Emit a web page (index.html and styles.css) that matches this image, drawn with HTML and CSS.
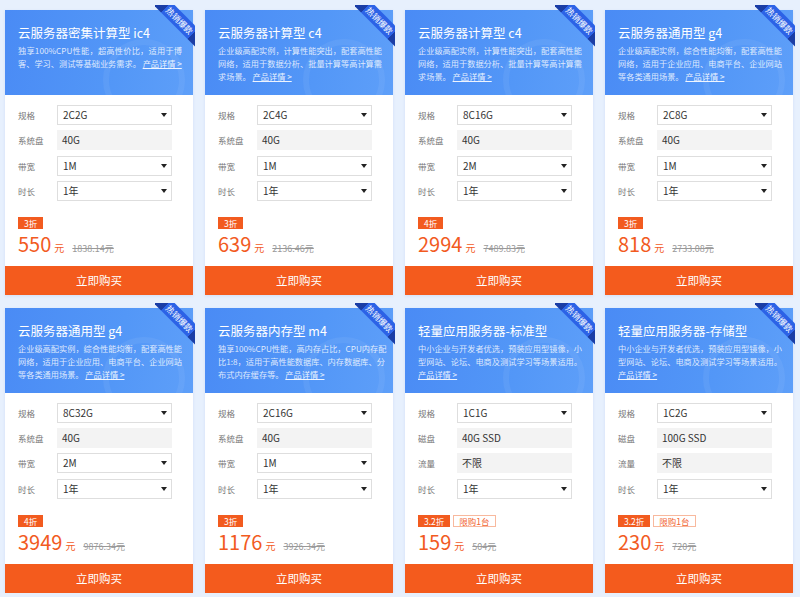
FILE: index.html
```html
<!DOCTYPE html>
<html lang="zh-CN">
<head>
  <meta charset="UTF-8" />
  <title>云服务器优惠</title>
  <link rel="stylesheet" href="styles.css">
</head>
<body>

  <div class="grid">

    <div class="card">
      <div class="head">
        <h3>云服务器密集计算型 ic4</h3>
        <p>
          <span>独享100%CPU性能，超高性价比，适用于博</span>
          <span>客、学习、测试等基础业务需求。 <a href="#">产品详情 &gt;</a></span>
        </p>
        <div class="ribbon"><span>热销爆款</span></div>
      </div>
      <div class="form">
        <div class="row"><label>规格</label><div class="select">2C2G</div></div>
        <div class="row"><label>系统盘</label><div class="field">40G</div></div>
        <div class="row"><label>带宽</label><div class="select">1M</div></div>
        <div class="row"><label>时长</label><div class="select">1年</div></div>
      </div>
      <div class="price">
        <div class="tags"><span class="tag">3折</span></div>
        <div class="amount"><b>550</b><i>元</i><s>1838.14元</s></div>
      </div>
      <button class="buy">立即购买</button>
    </div>

    <div class="card">
      <div class="head">
        <h3>云服务器计算型 c4</h3>
        <p>
          <span>企业级高配实例，计算性能突出，配套高性能</span>
          <span>网络，适用于数据分析、批量计算等高计算需</span>
          <span>求场景。 <a href="#">产品详情 &gt;</a></span>
        </p>
        <div class="ribbon"><span>热销爆款</span></div>
      </div>
      <div class="form">
        <div class="row"><label>规格</label><div class="select">2C4G</div></div>
        <div class="row"><label>系统盘</label><div class="field">40G</div></div>
        <div class="row"><label>带宽</label><div class="select">1M</div></div>
        <div class="row"><label>时长</label><div class="select">1年</div></div>
      </div>
      <div class="price">
        <div class="tags"><span class="tag">3折</span></div>
        <div class="amount"><b>639</b><i>元</i><s>2136.46元</s></div>
      </div>
      <button class="buy">立即购买</button>
    </div>

    <div class="card">
      <div class="head">
        <h3>云服务器计算型 c4</h3>
        <p>
          <span>企业级高配实例，计算性能突出，配套高性能</span>
          <span>网络，适用于数据分析、批量计算等高计算需</span>
          <span>求场景。 <a href="#">产品详情 &gt;</a></span>
        </p>
        <div class="ribbon"><span>热销爆款</span></div>
      </div>
      <div class="form">
        <div class="row"><label>规格</label><div class="select">8C16G</div></div>
        <div class="row"><label>系统盘</label><div class="field">40G</div></div>
        <div class="row"><label>带宽</label><div class="select">2M</div></div>
        <div class="row"><label>时长</label><div class="select">1年</div></div>
      </div>
      <div class="price">
        <div class="tags"><span class="tag">4折</span></div>
        <div class="amount"><b>2994</b><i>元</i><s>7489.83元</s></div>
      </div>
      <button class="buy">立即购买</button>
    </div>

    <div class="card">
      <div class="head">
        <h3>云服务器通用型 g4</h3>
        <p>
          <span>企业级高配实例，综合性能均衡，配套高性能</span>
          <span>网络，适用于企业应用、电商平台、企业网站</span>
          <span>等各类通用场景。 <a href="#">产品详情 &gt;</a></span>
        </p>
        <div class="ribbon"><span>热销爆款</span></div>
      </div>
      <div class="form">
        <div class="row"><label>规格</label><div class="select">2C8G</div></div>
        <div class="row"><label>系统盘</label><div class="field">40G</div></div>
        <div class="row"><label>带宽</label><div class="select">1M</div></div>
        <div class="row"><label>时长</label><div class="select">1年</div></div>
      </div>
      <div class="price">
        <div class="tags"><span class="tag">3折</span></div>
        <div class="amount"><b>818</b><i>元</i><s>2733.08元</s></div>
      </div>
      <button class="buy">立即购买</button>
    </div>

    <div class="card">
      <div class="head">
        <h3>云服务器通用型 g4</h3>
        <p>
          <span>企业级高配实例，综合性能均衡，配套高性能</span>
          <span>网络，适用于企业应用、电商平台、企业网站</span>
          <span>等各类通用场景。 <a href="#">产品详情 &gt;</a></span>
        </p>
        <div class="ribbon"><span>热销爆款</span></div>
      </div>
      <div class="form">
        <div class="row"><label>规格</label><div class="select">8C32G</div></div>
        <div class="row"><label>系统盘</label><div class="field">40G</div></div>
        <div class="row"><label>带宽</label><div class="select">2M</div></div>
        <div class="row"><label>时长</label><div class="select">1年</div></div>
      </div>
      <div class="price">
        <div class="tags"><span class="tag">4折</span></div>
        <div class="amount"><b>3949</b><i>元</i><s>9876.34元</s></div>
      </div>
      <button class="buy">立即购买</button>
    </div>

    <div class="card">
      <div class="head">
        <h3>云服务器内存型 m4</h3>
        <p>
          <span>独享100%CPU性能，高内存占比，CPU内存配</span>
          <span>比1:8，适用于高性能数据库、内存数据库、分</span>
          <span>布式内存缓存等。 <a href="#">产品详情 &gt;</a></span>
        </p>
        <div class="ribbon"><span>热销爆款</span></div>
      </div>
      <div class="form">
        <div class="row"><label>规格</label><div class="select">2C16G</div></div>
        <div class="row"><label>系统盘</label><div class="field">40G</div></div>
        <div class="row"><label>带宽</label><div class="select">1M</div></div>
        <div class="row"><label>时长</label><div class="select">1年</div></div>
      </div>
      <div class="price">
        <div class="tags"><span class="tag">3折</span></div>
        <div class="amount"><b>1176</b><i>元</i><s>3926.34元</s></div>
      </div>
      <button class="buy">立即购买</button>
    </div>

    <div class="card">
      <div class="head">
        <h3>轻量应用服务器-标准型</h3>
        <p>
          <span>中小企业与开发者优选，预装应用型镜像，小</span>
          <span>型网站、论坛、电商及测试学习等场景适用。</span>
          <span><a href="#">产品详情 &gt;</a></span>
        </p>
        <div class="ribbon"><span>热销爆款</span></div>
      </div>
      <div class="form">
        <div class="row"><label>规格</label><div class="select">1C1G</div></div>
        <div class="row"><label>磁盘</label><div class="field">40G SSD</div></div>
        <div class="row"><label>流量</label><div class="field">不限</div></div>
        <div class="row"><label>时长</label><div class="select">1年</div></div>
      </div>
      <div class="price">
        <div class="tags"><span class="tag">3.2折</span><span class="tag limit">限购1台</span></div>
        <div class="amount"><b>159</b><i>元</i><s>504元</s></div>
      </div>
      <button class="buy">立即购买</button>
    </div>

    <div class="card">
      <div class="head">
        <h3>轻量应用服务器-存储型</h3>
        <p>
          <span>中小企业与开发者优选，预装应用型镜像，小</span>
          <span>型网站、论坛、电商及测试学习等场景适用。</span>
          <span><a href="#">产品详情 &gt;</a></span>
        </p>
        <div class="ribbon"><span>热销爆款</span></div>
      </div>
      <div class="form">
        <div class="row"><label>规格</label><div class="select">1C2G</div></div>
        <div class="row"><label>磁盘</label><div class="field">100G SSD</div></div>
        <div class="row"><label>流量</label><div class="field">不限</div></div>
        <div class="row"><label>时长</label><div class="select">1年</div></div>
      </div>
      <div class="price">
        <div class="tags"><span class="tag">3.2折</span><span class="tag limit">限购1台</span></div>
        <div class="amount"><b>230</b><i>元</i><s>720元</s></div>
      </div>
      <button class="buy">立即购买</button>
    </div>

  </div>

</body>
</html>
```

FILE: styles.css
```css
body {
  margin: 0;
  background: #e7f0fd;
  font-family: "Noto Sans CJK SC", "Noto Sans", sans-serif;
  color: #333;
}
.grid {
  display: grid;
  grid-template-columns: repeat(4, 188px);
  column-gap: 12px;
  row-gap: 13px;
  padding: 10px 0 0 5px;
}
.card {
  background: #fff;
  display: flex;
  flex-direction: column;
  box-shadow: 0 1px 3px rgba(60, 110, 200, 0.12);
}
.head {
  position: relative;
  height: 85px;
  box-sizing: border-box;
  padding: 14px 0 0 13px;
  background: linear-gradient(100deg, #4a8bf5 0%, #5397f7 60%, #5e9ff9 100%);
  color: #fff;
}
.head::after {
  content: "";
  position: absolute;
  right: 8px;
  bottom: -26px;
  width: 70px;
  height: 70px;
  border-radius: 50%;
  border: 6px solid rgba(255, 255, 255, 0.06);
  clip-path: inset(0 0 26px 0);
}
.head h3 {
  margin: 0;
  font-size: 12.5px;
  font-weight: normal;
  line-height: 18px;
  white-space: nowrap;
}
.head p {
  position: relative;
  z-index: 1;
  margin: 2px 0 0;
  width: 164px;
  font-size: 8.2px;
  line-height: 13px;
  color: rgba(255, 255, 255, 0.82);
}
.head p span {
  display: block;
  white-space: nowrap;
  text-align: justify;
  text-align-last: justify;
}
.head p span:last-child {
  text-align-last: left;
}
.head a {
  color: rgba(255, 255, 255, 0.9);
  text-decoration: underline;
  margin-left: 6px;
}
.head p span a:only-child {
  margin-left: 0;
}
.ribbon {
  position: absolute;
  top: -5px;
  right: -2px;
  width: 40px;
  height: 42px;
  overflow: hidden;
  z-index: 2;
}
.ribbon span {
  position: absolute;
  left: -6px;
  top: 8px;
  width: 61px;
  height: 15px;
  line-height: 15px;
  text-align: center;
  font-size: 8.5px;
  color: #fff;
  transform: rotate(45deg);
  background: linear-gradient(90deg, #1a3da6 0 12px, #2c62e6 12px 49px, #1a3da6 49px);
}
.form {
  padding: 10px 21px 0 13px;
  display: flex;
  flex-direction: column;
  gap: 5.3px;
}
.row {
  display: flex;
  align-items: center;
  height: 20px;
}
.row label {
  width: 39px;
  font-size: 8.5px;
  color: #777;
}
.select,
.field {
  flex: 1;
  height: 20px;
  box-sizing: border-box;
  padding-left: 5px;
  font-size: 10px;
  line-height: 20px;
  color: #333;
}
.select {
  position: relative;
  border: 1px solid #dedede;
  line-height: 18px;
}
.select::after {
  content: "";
  position: absolute;
  right: 4px;
  top: 7px;
  border-left: 3.5px solid transparent;
  border-right: 3.5px solid transparent;
  border-top: 4px solid #222;
}
.field {
  background: #f3f3f3;
}
.price {
  height: 65px;
  box-sizing: border-box;
  padding: 16px 13px 0;
}
.tags {
  display: flex;
  gap: 3px;
  height: 12px;
}
.tag {
  background: #f25b1f;
  color: #fff;
  font-size: 8.5px;
  line-height: 12px;
  padding: 0 6px;
}
.tag.limit {
  background: #fff;
  color: #f26532;
  border: 1px solid #f8b99e;
  line-height: 10px;
  padding: 0 5px;
}
.amount {
  margin-top: 3px;
  display: flex;
  align-items: baseline;
  color: #f25b1f;
}
.amount b {
  font-weight: normal;
  font-size: 20px;
  line-height: 24px;
}
.amount i {
  font-style: normal;
  font-size: 10px;
  margin-left: 3px;
}
.amount s {
  color: #999;
  font-size: 9px;
  margin-left: 8px;
}
.buy {
  border: none;
  height: 29px;
  background: #f45b1d;
  color: #fff;
  font-family: inherit;
  font-size: 11.5px;
  cursor: pointer;
}
```
